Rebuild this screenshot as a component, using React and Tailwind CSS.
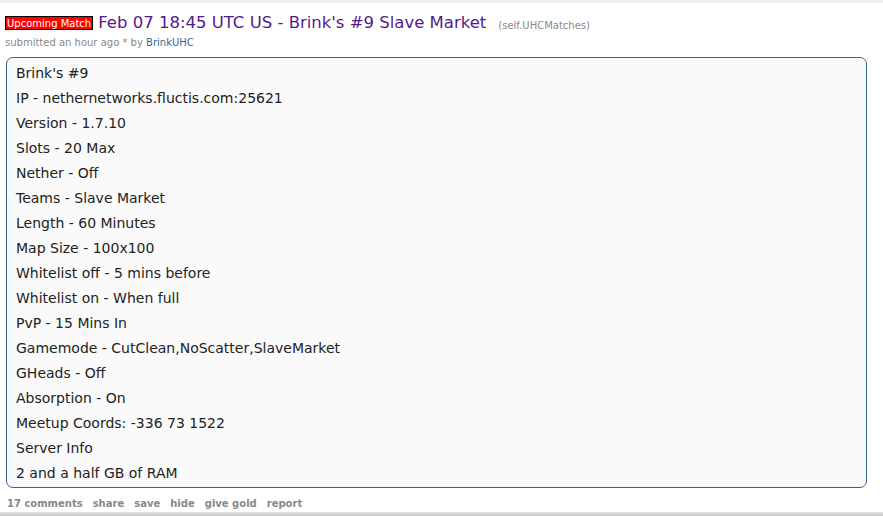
export default function App() {
  const lines = [
    "Brink's #9",
    "IP - nethernetworks.fluctis.com:25621",
    "Version - 1.7.10",
    "Slots - 20 Max",
    "Nether - Off",
    "Teams - Slave Market",
    "Length - 60 Minutes",
    "Map Size - 100x100",
    "Whitelist off - 5 mins before",
    "Whitelist on - When full",
    "PvP - 15 Mins In",
    "Gamemode - CutClean,NoScatter,SlaveMarket",
    "GHeads - Off",
    "Absorption - On",
    "Meetup Coords: -336 73 1522",
    "Server Info",
    "2 and a half GB of RAM",
  ];
  const font = { fontFamily: '"DejaVu Sans", Verdana, sans-serif' };
  return (
    <div className="w-[883px] h-[516px] bg-white flex flex-col overflow-hidden" style={font}>
      <div className="h-[3px] bg-[#f0f0f0] shrink-0" />
      <div className="pl-[5px] pt-[10px] flex items-center">
        <span className="bg-[#ff0000] border border-black text-white text-[10px] leading-[11px] px-[1px] h-[14px] flex items-center">
          Upcoming Match
        </span>
        <span className="ml-[5px] text-[#551a8b] text-[16.5px] leading-[20px]">
          Feb 07 18:45 UTC US - Brink's #9 Slave Market
        </span>
        <span className="ml-[12px] text-[#888] text-[10px] mt-[4px]">(self.UHCMatches)</span>
      </div>
      <div className="pl-[5px] mt-[4px] text-[10px] leading-[12px] text-[#888]">
        submitted an hour ago * by <span className="text-[#369]">BrinkUHC</span>
      </div>
      <div className="ml-[6px] mt-[8px] w-[861px] border border-[#369] rounded-[7px] bg-[#fafafa] pt-[3px] pb-[1px] pl-[9px]">
        {lines.map((l, i) => (
          <div key={i} className="text-[14px] leading-[25px] text-[#222]">{l}</div>
        ))}
      </div>
      <div className="pl-[7px] mt-[10px] flex gap-[10px] text-[10px] font-bold text-[#888] leading-[12px]">
        <span>17 comments</span>
        <span>share</span>
        <span>save</span>
        <span>hide</span>
        <span>give gold</span>
        <span>report</span>
      </div>
      <div className="flex-1" />
      <div className="h-[4px] bg-gradient-to-b from-[#e0e0e0] to-[#c8c8c8] shrink-0" />
    </div>
  );
}
